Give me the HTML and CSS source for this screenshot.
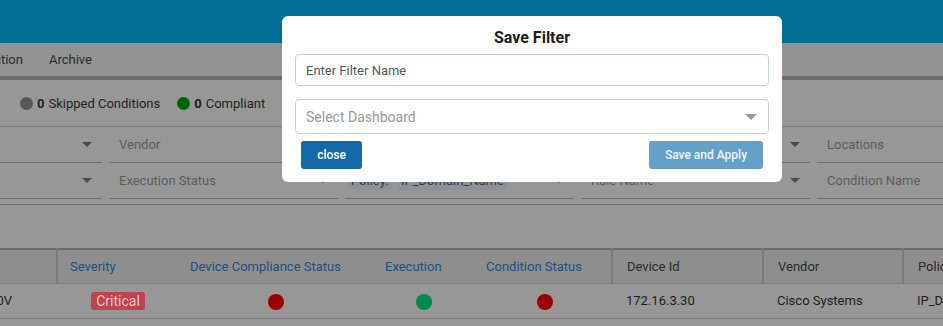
FILE: index.html
```html
<!DOCTYPE html>
<html lang="en">
<head>
  <meta charset="UTF-8" />
  <title>Compliance Report</title>
  <link rel="stylesheet" href="styles.css">
</head>
<body>
  <!-- page behind the dialog (dimmed) -->
  <div class="page">
    <header class="topbar"></header>

    <nav class="tabs">
      <span class="tab">Configuration</span>
      <span class="tab">Archive</span>
    </nav>

    <div class="summary">
      <span class="stat"><i class="dot dot-grey"></i><b>0</b> Skipped Conditions</span>
      <span class="stat"><i class="dot dot-green"></i><b>0</b> Compliant</span>
      <span class="stat"><i class="dot dot-amber"></i></span>
    </div>

    <div class="filters">
      <div class="filter-row">
        <div class="field"><span class="ph">Device Group</span><i class="caret"></i></div>
        <div class="field"><span class="ph">Vendor</span><i class="caret"></i></div>
        <div class="field"><span class="ph">Device Name</span><i class="caret"></i></div>
        <div class="field"><span class="ph">Device Type</span><i class="caret"></i></div>
        <div class="field"><span class="ph">Locations</span><i class="caret"></i></div>
      </div>
      <div class="filter-row">
        <div class="field"><span class="ph">Severity</span><i class="caret"></i></div>
        <div class="field"><span class="ph">Execution Status</span><i class="caret"></i></div>
        <div class="field chips">
          <span class="chip">Policy:</span>
          <span class="chip">IP_Domain_Name</span>
          <i class="caret"></i>
        </div>
        <div class="field"><span class="ph">Rule Name</span><i class="caret"></i></div>
        <div class="field"><span class="ph">Condition Name</span><i class="caret"></i></div>
      </div>
    </div>

    <div class="spacer"></div>

    <table class="grid">
      <thead>
        <tr>
          <th class="c-name">Device Name</th>
          <th class="c-sev blue">Severity</th>
          <th class="c-dcs blue wide">Device Compliance Status</th>
          <th class="c-exe blue wide">Execution</th>
          <th class="c-cond blue wide">Condition Status</th>
          <th class="c-id sep">Device Id</th>
          <th class="c-vendor sep">Vendor</th>
          <th class="c-policy sep">Policy</th>
        </tr>
      </thead>
      <tbody>
        <tr>
          <td class="c-name name">CORE-RTR-40V</td>
          <td class="c-sev mid"><span class="badge">Critical</span></td>
          <td class="c-dcs mid"><i class="led red"></i></td>
          <td class="c-exe mid"><i class="led green"></i></td>
          <td class="c-cond mid"><i class="led red"></i></td>
          <td class="c-id">172.16.3.30</td>
          <td class="c-vendor">Cisco Systems</td>
          <td class="c-policy">IP_Domain_Name</td>
        </tr>
      </tbody>
    </table>
  </div>

  <!-- Save filter dialog -->
  <div class="modal">
    <h3 class="modal-title">Save Filter</h3>
    <input class="input" type="text" placeholder="Enter Filter Name" />
    <div class="select">
      <span>Select Dashboard</span>
      <i class="select-caret"></i>
    </div>
    <div class="modal-actions">
      <button class="btn btn-close">close</button>
      <button class="btn btn-save">Save and Apply</button>
    </div>
  </div>
</body>
</html>
```

FILE: styles.css
```css
/* BASE */
* { margin: 0; padding: 0; box-sizing: border-box; }
body {
  font-family: Roboto, "Liberation Sans", sans-serif;
  font-size: 13px;
  background: #979797;
  color: #222;
  overflow: hidden;
  width: 943px; height: 326px;
}

/* PAGE (scrolled sideways, shown dimmed) */
.page {
  margin-left: -126px;
  width: 1400px;
}
.topbar {
  height: 43px;
  background: #006f96;
}
.tabs {
  height: 37px;
  display: flex; align-items: center;
  background: #939393;
  border-bottom: 4px solid #6e6e6e;
  padding-left: 58px;
  color: #2b2b2b;
}
.tab { padding: 0 13px; }

.summary {
  height: 47px;
  display: flex; align-items: center;
  gap: 17px;
  padding-left: 146px;
  border-bottom: 1px solid #7f7f7f;
  color: #222;
}
.stat { display: flex; align-items: center; }
.stat b { margin-right: 4px; }
.dot {
  width: 13px; height: 13px;
  border-radius: 50%;
  margin-right: 4px;
}
.dot-grey  { background: #585858; }
.dot-green { background: #006400; }
.dot-amber { background: #9c7a00; }

/* FILTERS */
.filters {
  padding-bottom: 5px;
  border-bottom: 1px solid #707070;
}
.filter-row {
  display: flex; gap: 7px;
  margin-left: -1px;
}
.field {
  width: 229px; height: 36px;
  display: flex; align-items: center;
  padding: 0 10px;
  border-bottom: 1px solid #6d6d6d;
  color: #5c5c5c;
}
.field .ph { flex: 1; }
.caret {
  margin-left: auto;
  width: 0; height: 0;
  border-left: 5px solid transparent;
  border-right: 5px solid transparent;
  border-top: 5px solid #4a4a4a;
}
.field.chips { padding-left: 3px; gap: 6px; }
.chip {
  background: #8c9299;
  color: #3a3a3a;
  padding: 2px 3px;
  border-radius: 2px;
}

.spacer { height: 43px; }

/* TABLE */
.grid {
  border-collapse: collapse;
  table-layout: fixed;
  border-top: 2px solid #6a6a6a;
}
.grid th {
  height: 34px;
  background: #8e8e8e;
  font-weight: 400;
  text-align: left;
  padding-left: 14px;
  color: #2a2a2a;
  border-bottom: 1px solid #808080;
}
.grid th.blue { color: #1f4f7f; padding-left: 12px; }
.grid th.wide { padding-left: 20px; }
.grid th.c-cond { padding-left: 21px; }
.grid th.c-sev { border-left: 2px solid #7a7a7a; }
.grid th.sep { border-left: 2px solid #7a7a7a; }
.grid td {
  height: 35px;
  padding-left: 14px;
  color: #1e1e1e;
  border-bottom: 1px solid #808080;
  white-space: nowrap; overflow: hidden;
}
.grid td.name { text-align: right; padding-right: 45px; }
.grid td.mid { text-align: center; padding-left: 0; }
.c-name   { width: 183px; }
.c-sev    { width: 113px; }
.c-dcs    { width: 195px; }
.c-exe    { width: 100px; }
.c-cond   { width: 147px; }
.c-id     { width: 151px; }
.c-vendor { width: 140px; }
.c-policy { width: 200px; }
td.c-sev  { padding-left: 9px !important; }
td.c-dcs  { padding-left: 17px !important; }
td.c-exe  { padding-left: 18px !important; }
td.c-cond { padding-left: 13px !important; }

.badge {
  display: inline-block;
  background: #bf4350;
  color: #f2c4c8;
  font-size: 14px;
  padding: 1px 5px;
  border-radius: 3px;
  vertical-align: middle;
}
.led {
  display: inline-block;
  width: 16px; height: 16px;
  border-radius: 50%;
  vertical-align: middle;
  margin-top: 3px;
}
.led.red   { background: #9c0000; }
.led.green { background: #00894f; }

/* MODAL */
.modal {
  position: fixed; top: 16px; left: 282px;
  width: 500px; height: 166px;
  background: #fff;
  border-radius: 6px;
  padding: 12px 13px 0 13px;
  display: flex; flex-direction: column;
}
.modal-title {
  text-align: center;
  font-size: 16px; font-weight: 700;
  color: #1c1c1c;
  line-height: 20px;
  margin-bottom: 6px;
}
.input, .select {
  width: 474px;
  border: 1px solid #c5d0d8;
  border-radius: 4px;
  font-family: inherit;
  font-size: 13px;
  padding: 0 10px;
}
.input {
  height: 32px;
  outline: none;
  margin-bottom: 13px;
}
.input::placeholder { color: #4f5a63; }
.select {
  height: 35px;
  display: flex; align-items: center;
  border-color: #cfcfcf;
  color: #9a9a9a;
  font-size: 14px;
}
.select-caret {
  margin-left: auto; margin-right: 1px;
  width: 0; height: 0;
  border-left: 6px solid transparent;
  border-right: 6px solid transparent;
  border-top: 6px solid #999;
}
.modal-actions {
  display: flex; justify-content: space-between;
  padding: 7px 6px 0 6px;
}
.btn {
  height: 28px;
  border: none; border-radius: 3px;
  font-family: inherit;
  font-size: 12px; font-weight: 500;
  color: #fff;
}
.btn-close { width: 61px; background: #1469a8; }
.btn-save  { width: 114px; background: #65a0c8; color: #eef4f9; }
```
